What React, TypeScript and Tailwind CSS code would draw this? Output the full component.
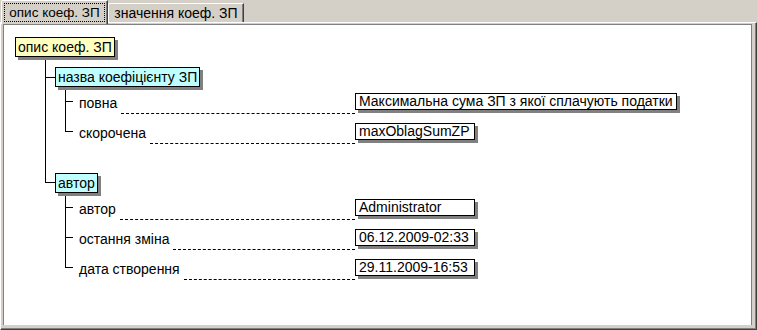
import type { ReactNode } from "react";

interface NodeBoxProps {
  bg: string;
  children: ReactNode;
}

function NodeBox({ bg, children }: NodeBoxProps) {
  return (
    <div
      className={`relative inline-block h-[20px] whitespace-nowrap border border-black px-[2px] leading-[18px] shadow-[3px_3px_0_#808080] ${bg}`}
    >
      {children}
    </div>
  );
}

interface BranchProps {
  last?: boolean;
  stemClass: string;
  padClass: string;
  children: ReactNode;
}

function Branch({ last, stemClass, padClass, children }: BranchProps) {
  return (
    <div className="flex">
      <div className="flex w-[10px] shrink-0 flex-col">
        <div className={`border-b border-l border-black ${stemClass}`} />
        {!last && <div className="flex-1 border-l border-black" />}
      </div>
      <div className={padClass}>{children}</div>
    </div>
  );
}

interface LeafProps {
  label: string;
  value: string;
  last?: boolean;
}

function Leaf({ label, value, last }: LeafProps) {
  return (
    <div className="flex h-[30px]">
      <div className="flex w-[8px] shrink-0 flex-col">
        <div className="h-[14px] border-b border-l border-black" />
        {!last && <div className="flex-1 border-l border-black" />}
      </div>
      <div className="flex h-[26px] w-[282px] shrink-0 items-end">
        <span className="mb-[3px] whitespace-nowrap pl-[6px] pr-[4px] leading-[16px]">
          {label}
        </span>
        <div className="flex-1 border-b border-dashed border-black" />
      </div>
      <div className="relative mt-[5px] h-[17px] min-w-[120px] self-start whitespace-nowrap border border-black bg-white px-[3px] leading-[15px] shadow-[3px_3px_0_#808080]">
        {value}
      </div>
    </div>
  );
}

export default function App() {
  return (
    <div className="flex h-[330px] w-[757px] flex-col bg-[#d4d0c8] font-['Liberation_Sans',Arial,sans-serif] text-[14px] text-black">
      {/* tabs */}
      <div className="flex h-[22px] shrink-0 items-end pl-[1px]">
        <div className="relative z-10 -mb-[2px] flex h-[24px] w-[107px] rounded-tl-[2px] border-l border-t border-white border-r-[#404040] bg-[#d4d0c8] px-[2px] pb-[2px] pt-[2px] shadow-[inset_-1px_0_0_#808080] [border-right-width:1px]">
          <span className="flex flex-1 items-center justify-center whitespace-nowrap border border-dotted border-black text-[13.5px] leading-[15px]">
            опис коеф. ЗП
          </span>
        </div>
        <div className="flex h-[19px] w-[136px] items-center justify-center whitespace-nowrap rounded-tl-[2px] border-l border-t border-white border-r-[#404040] pt-[1px] leading-[15px] shadow-[inset_-1px_0_0_#808080] [border-right-width:1px]">
          значення коеф. ЗП
        </div>
      </div>

      {/* panel */}
      <div className="flex-1 border border-b-[#404040] border-l-white border-r-[#404040] border-t-white">
        <div className="h-full border-b border-r border-b-[#808080] border-r-[#808080] pb-[3px] pl-[2px] pr-[3px] pt-[1px]">
          <div className="h-full border-l border-r border-t border-[#808080] bg-white pl-[11px] pt-[12px]">
            <NodeBox bg="bg-[#ffffc0]">опис коеф. ЗП</NodeBox>
            <div className="ml-[30px]">
              <Branch stemClass="h-[20px]" padClass="pt-[9px]">
                <NodeBox bg="bg-[#c0ffff]">назва коефіцієнту ЗП</NodeBox>
                <div className="ml-[10px]">
                  <Leaf
                    label="повна"
                    value="Максимальна сума ЗП з якої сплачують податки"
                  />
                  <Leaf label="скорочена" value="maxOblagSumZP" last />
                </div>
              </Branch>
              <Branch last stemClass="h-[35px]" padClass="pt-[25px]">
                <NodeBox bg="bg-[#c0ffff]">автор</NodeBox>
                <div className="ml-[10px]">
                  <Leaf label="автор" value="Administrator" />
                  <Leaf label="остання зміна" value="06.12.2009-02:33" />
                  <Leaf label="дата створення" value="29.11.2009-16:53" last />
                </div>
              </Branch>
            </div>
          </div>
        </div>
      </div>
    </div>
  );
}
